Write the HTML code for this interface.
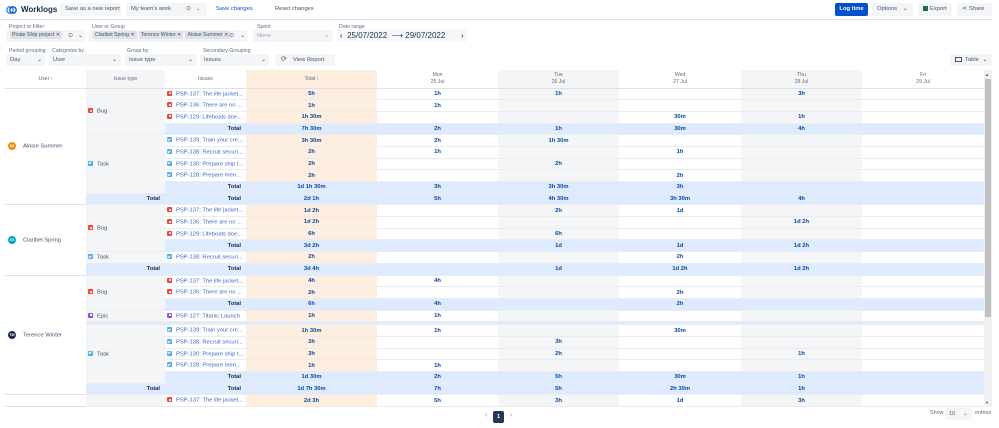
<!DOCTYPE html>
<html><head><meta charset="utf-8">
<style>
*{box-sizing:border-box;margin:0;padding:0}
body{width:999px;height:428px;overflow:hidden;background:#fff;font-family:"Liberation Sans",sans-serif;color:#172b4d;position:relative}
.a{position:absolute}
.btn{position:absolute;background:#f4f5f7;border-radius:2px;font-size:5.8px;color:#42526e;line-height:13px;height:13px;padding:0 5px;white-space:nowrap}
.lab{position:absolute;font-size:5.2px;color:#5e6c84;white-space:nowrap}
.box{position:absolute;background:#f4f5f7;border-radius:2px;height:12px;font-size:5.8px;color:#42526e;line-height:12px;padding-left:4px;white-space:nowrap}
.tag{display:inline-block;background:#dfe1e6;line-height:8px;height:8px;padding:0 2px;font-size:5.2px;border-radius:1px;margin-right:2px;vertical-align:middle}
.wrap{position:absolute;left:5px;top:70px;width:979px;height:337px;overflow:hidden}
table{border-collapse:collapse;table-layout:fixed;width:979px;font-size:5.8px}
th{height:18px;font-weight:normal;color:#5e6c84;font-size:5.2px;text-align:center;border-bottom:1px solid #dfe1e6;line-height:6.5px}
td{height:11.7px;padding:0;border-bottom:1px solid #ebecf0;text-align:center;font-weight:bold;color:#0747a6;white-space:nowrap;overflow:hidden}
.g{background:#f4f5f7}
.p{background:#fdeedf}
tr.t td{background:#deebff}
td.user{background:#fff;text-align:left;font-weight:normal;color:#42526e;padding-left:3px;vertical-align:middle;border-bottom:1px solid #dfe1e6}
td.type{background:#f4f5f7;text-align:left;font-weight:normal;color:#42526e;padding-left:2px}
td.iss{text-align:left;font-weight:normal;color:#3a67c9;padding-left:2px;background:#fff}
td.lbl{text-align:right;color:#172b4d;padding-right:5px}
.av{display:inline-block;width:8px;height:8px;border-radius:50%;color:#fff;font-size:3.5px;line-height:8px;text-align:center;margin-right:7px;vertical-align:middle;font-weight:bold}
.ic{display:inline-block;width:5px;height:5px;border-radius:1px;margin-right:4px;vertical-align:-0.5px;position:relative}
.bug{background:#e5493a}.bug:after{content:"";position:absolute;left:1.5px;top:1.5px;width:2px;height:2px;border-radius:50%;background:#fff}
.task{background:#4bade8}.task:after{content:"";position:absolute;left:1.3px;top:0.7px;width:1.2px;height:2.2px;border:solid #fff;border-width:0 0.8px 0.8px 0;transform:rotate(45deg)}
.epic{background:#904ee2}.epic:after{content:"";position:absolute;left:1.5px;top:1.5px;width:2px;height:2px;background:#fff}
</style></head><body>

<svg class="a" style="left:6px;top:5px" width="11" height="10" viewBox="0 0 11 10"><circle cx="4" cy="5" r="3.2" fill="none" stroke="#2684ff" stroke-width="1.3"/><circle cx="7" cy="5" r="3.2" fill="none" stroke="#0052cc" stroke-width="1.3"/></svg>
<div class="a" style="left:21px;top:5px;font-size:8px;font-weight:bold;color:#172b4d">Worklogs</div>
<div class="btn" style="left:60px;top:3px;width:61px">Save as a new report</div>
<div class="btn" style="left:126px;top:3px;width:81px">My team's work<span style="position:absolute;left:60px;font-size:6px">⊙</span><span style="position:absolute;left:70px;font-size:5px">⌄</span></div>
<div class="a" style="left:216px;top:6px;font-size:5.8px;color:#0052cc">Save changes</div>
<div class="a" style="left:275px;top:6px;font-size:5.8px;color:#42526e">Reset changes</div>
<div class="btn" style="left:835px;top:3px;width:33px;background:#0052cc;color:#fff;font-weight:bold;text-align:center;padding:0">Log time</div>
<div class="btn" style="left:872px;top:3px;width:41px">Options <span style="margin-left:4px">⌄</span></div>
<div class="btn" style="left:918px;top:3px;width:34px"><span style="display:inline-block;width:5px;height:5px;background:#1d7044;vertical-align:-0.5px;margin-right:2px"></span>Export</div>
<div class="btn" style="left:957px;top:3px;width:35px"><span style="font-size:6px;margin-right:2px">⋖</span>Share</div>
<div class="a" style="left:0;top:19px;width:992px;height:1px;background:#dfe1e6"></div>

<div class="lab" style="left:9px;top:24px">Project or Filter</div>
<div class="box" style="left:6px;top:30px;width:80px"><span class="tag">Pirate Ship project ✕</span><span style="position:absolute;left:62px">⊙</span><span style="position:absolute;left:72px">⌄</span></div>
<div class="lab" style="left:92px;top:24px">User or Group</div>
<div class="box" style="left:89px;top:30px;width:158px"><span class="tag">Claribel Spring ✕</span><span class="tag">Terence Winter ✕</span><span class="tag">Aloise Summer ✕</span><span style="position:absolute;left:140px">⊙</span><span style="position:absolute;left:151px">⌄</span></div>
<div class="lab" style="left:257px;top:24px">Sprint</div>
<div class="box" style="left:253px;top:30px;width:80px;color:#97a0af">None<span style="position:absolute;left:71px">⌄</span></div>
<div class="lab" style="left:339px;top:24px">Date range</div>
<div class="box" style="left:337px;top:29px;width:130px;height:13px;background:#f7f8f9;font-size:8px;color:#172b4d;line-height:13px;padding-left:3px">‹&nbsp;&nbsp;25/07/2022&nbsp;&nbsp;⟶&nbsp;29/07/2022<span style="position:absolute;left:124px">›</span></div>

<div class="lab" style="left:9px;top:48px">Period grouping</div>
<div class="box" style="left:6px;top:54px;width:39px">Day<span style="position:absolute;left:31px">⌄</span></div>
<div class="lab" style="left:52px;top:48px">Categorize by</div>
<div class="box" style="left:49px;top:54px;width:72px">User<span style="position:absolute;left:63px">⌄</span></div>
<div class="lab" style="left:127px;top:48px">Group by</div>
<div class="box" style="left:125px;top:54px;width:72px">Issue type<span style="position:absolute;left:63px">⌄</span></div>
<div class="lab" style="left:203px;top:48px">Secondary Grouping</div>
<div class="box" style="left:200px;top:54px;width:69px">Issues<span style="position:absolute;left:61px">⌄</span></div>
<div class="box" style="left:275px;top:54px;width:60px;padding-left:6px;color:#42526e"><span style="font-size:7px;margin-right:6px">⟳</span>View Report</div>
<div class="box" style="left:950px;top:54px;width:42px;padding-left:5px"><span style="display:inline-block;width:7px;height:5px;border:1px solid #42526e;vertical-align:-0.5px;margin-right:3px"></span>Table <span style="margin-left:2px">⌄</span></div>

<div class="wrap">
<table>
<colgroup><col style="width:81px"><col style="width:79px"><col style="width:81px"><col style="width:131px"><col style="width:121px"><col style="width:121px"><col style="width:122px"><col style="width:121px"><col style="width:122px"></colgroup>
<tr><th>User ⁝</th><th class="g">Issue type</th><th>Issues</th><th class="p">Total ⁝</th><th>Mon<br>25 Jul</th><th class="g">Tue<br>26 Jul</th><th>Wed<br>27 Jul</th><th class="g">Thu<br>28 Jul</th><th>Fri<br>29 Jul</th></tr>

<tr><td rowspan="10" class="user"><span class="av" style="background:#ff8b00">AS</span>Aloise Summer</td><td rowspan="4" class="type"><i class="ic bug"></i>Bug</td><td class="iss"><i class="ic bug"></i>PSP-137: The life jacket...</td><td class="p">5h</td><td>1h</td><td class="g">1h</td><td></td><td class="g">3h</td><td></td></tr>
<tr><td class="iss"><i class="ic bug"></i>PSP-136: There are no ...</td><td class="p">1h</td><td>1h</td><td class="g"></td><td></td><td class="g"></td><td></td></tr>
<tr><td class="iss"><i class="ic bug"></i>PSP-129: Lifeboats doe...</td><td class="p">1h 30m</td><td></td><td class="g"></td><td>30m</td><td class="g">1h</td><td></td></tr>
<tr class="t"><td class="lbl">Total</td><td>7h 30m</td><td>2h</td><td>1h</td><td>30m</td><td>4h</td><td></td></tr>
<tr><td rowspan="5" class="type"><i class="ic task"></i>Task</td><td class="iss"><i class="ic task"></i>PSP-139: Train your cre...</td><td class="p">3h 30m</td><td>2h</td><td class="g">1h 30m</td><td></td><td class="g"></td><td></td></tr>
<tr><td class="iss"><i class="ic task"></i>PSP-138: Recruit securi...</td><td class="p">2h</td><td>1h</td><td class="g"></td><td>1h</td><td class="g"></td><td></td></tr>
<tr><td class="iss"><i class="ic task"></i>PSP-130: Prepare ship t...</td><td class="p">2h</td><td></td><td class="g">2h</td><td></td><td class="g"></td><td></td></tr>
<tr><td class="iss"><i class="ic task"></i>PSP-128: Prepare men...</td><td class="p">2h</td><td></td><td class="g"></td><td>2h</td><td class="g"></td><td></td></tr>
<tr class="t"><td class="lbl">Total</td><td>1d 1h 30m</td><td>3h</td><td>3h 30m</td><td>3h</td><td></td><td></td></tr>
<tr class="t"><td class="lbl">Total</td><td class="lbl">Total</td><td>2d 1h</td><td>5h</td><td>4h 30m</td><td>3h 30m</td><td>4h</td><td></td></tr>

<tr><td rowspan="6" class="user"><span class="av" style="background:#00a3bf">CS</span>Claribel Spring</td><td rowspan="4" class="type"><i class="ic bug"></i>Bug</td><td class="iss"><i class="ic bug"></i>PSP-137: The life jacket...</td><td class="p">1d 2h</td><td></td><td class="g">2h</td><td>1d</td><td class="g"></td><td></td></tr>
<tr><td class="iss"><i class="ic bug"></i>PSP-136: There are no ...</td><td class="p">1d 2h</td><td></td><td class="g"></td><td></td><td class="g">1d 2h</td><td></td></tr>
<tr><td class="iss"><i class="ic bug"></i>PSP-129: Lifeboats doe...</td><td class="p">6h</td><td></td><td class="g">6h</td><td></td><td class="g"></td><td></td></tr>
<tr class="t"><td class="lbl">Total</td><td>3d 2h</td><td></td><td>1d</td><td>1d</td><td>1d 2h</td><td></td></tr>
<tr><td class="type"><i class="ic task"></i>Task</td><td class="iss"><i class="ic task"></i>PSP-138: Recruit securi...</td><td class="p">2h</td><td></td><td class="g"></td><td>2h</td><td class="g"></td><td></td></tr>
<tr class="t"><td class="lbl">Total</td><td class="lbl">Total</td><td>3d 4h</td><td></td><td>1d</td><td>1d 2h</td><td>1d 2h</td><td></td></tr>

<tr><td rowspan="11" class="user"><span class="av" style="background:#172b4d">TW</span>Terence Winter</td><td rowspan="3" class="type"><i class="ic bug"></i>Bug</td><td class="iss"><i class="ic bug"></i>PSP-137: The life jacket...</td><td class="p">4h</td><td>4h</td><td class="g"></td><td></td><td class="g"></td><td></td></tr>
<tr><td class="iss"><i class="ic bug"></i>PSP-136: There are no ...</td><td class="p">2h</td><td></td><td class="g"></td><td>2h</td><td class="g"></td><td></td></tr>
<tr class="t"><td class="lbl">Total</td><td>6h</td><td>4h</td><td></td><td>2h</td><td></td><td></td></tr>
<tr><td class="type"><i class="ic epic"></i>Epic</td><td class="iss"><i class="ic epic"></i>PSP-127: Titanic Launch</td><td class="p">1h</td><td>1h</td><td class="g"></td><td></td><td class="g"></td><td></td></tr>
<tr class="t" style="height:3px"><td colspan="8" style="height:3px"></td></tr>
<tr><td rowspan="5" class="type"><i class="ic task"></i>Task</td><td class="iss"><i class="ic task"></i>PSP-139: Train your cre...</td><td class="p">1h 30m</td><td>1h</td><td class="g"></td><td>30m</td><td class="g"></td><td></td></tr>
<tr><td class="iss"><i class="ic task"></i>PSP-138: Recruit securi...</td><td class="p">3h</td><td></td><td class="g">3h</td><td></td><td class="g"></td><td></td></tr>
<tr><td class="iss"><i class="ic task"></i>PSP-130: Prepare ship t...</td><td class="p">3h</td><td></td><td class="g">2h</td><td></td><td class="g">1h</td><td></td></tr>
<tr><td class="iss"><i class="ic task"></i>PSP-128: Prepare men...</td><td class="p">1h</td><td>1h</td><td class="g"></td><td></td><td class="g"></td><td></td></tr>
<tr class="t"><td class="lbl">Total</td><td>1d 30m</td><td>2h</td><td>5h</td><td>30m</td><td>1h</td><td></td></tr>
<tr class="t"><td class="lbl">Total</td><td class="lbl">Total</td><td>1d 7h 30m</td><td>7h</td><td>5h</td><td>2h 30m</td><td>1h</td><td></td></tr>

<tr><td class="user"></td><td class="type"></td><td class="iss"><i class="ic bug"></i>PSP-137: The life jacket...</td><td class="p">2d 3h</td><td>5h</td><td class="g">3h</td><td>1d</td><td class="g">3h</td><td></td></tr>
<tr><td class="user"></td><td class="type"></td><td class="iss"></td><td class="p"></td><td></td><td class="g"></td><td></td><td class="g"></td><td></td></tr>
</table>
</div>

<div class="a" style="left:984px;top:70px;width:8px;height:337px;background:#f1f1f1"></div>
<div class="a" style="left:985px;top:79px;width:6px;height:238px;background:#c1c1c1"></div>
<div class="a" style="left:985px;top:72px;font-size:4px;color:#505050">▲</div>
<div class="a" style="left:985px;top:400px;font-size:4px;color:#505050">▼</div>

<div class="a" style="left:485px;top:412px;font-size:7px;color:#97a0af">‹</div>
<div class="a" style="left:493px;top:411px;width:11px;height:12px;background:#253858;border-radius:2px;color:#fff;font-size:5.5px;line-height:12px;text-align:center;font-weight:bold">1</div>
<div class="a" style="left:510px;top:412px;font-size:7px;color:#97a0af">›</div>
<div class="a" style="left:930px;top:410px;font-size:5.4px;color:#5e6c84">Show</div>
<div class="a" style="left:945px;top:408px;width:27px;height:12px;background:#f4f5f7;border-radius:2px;font-size:5.4px;color:#42526e;line-height:12px;padding-left:4px">10<span style="position:absolute;left:18px">⌄</span></div>
<div class="a" style="left:975px;top:410px;font-size:5.4px;color:#5e6c84">entries</div>
</body></html>
